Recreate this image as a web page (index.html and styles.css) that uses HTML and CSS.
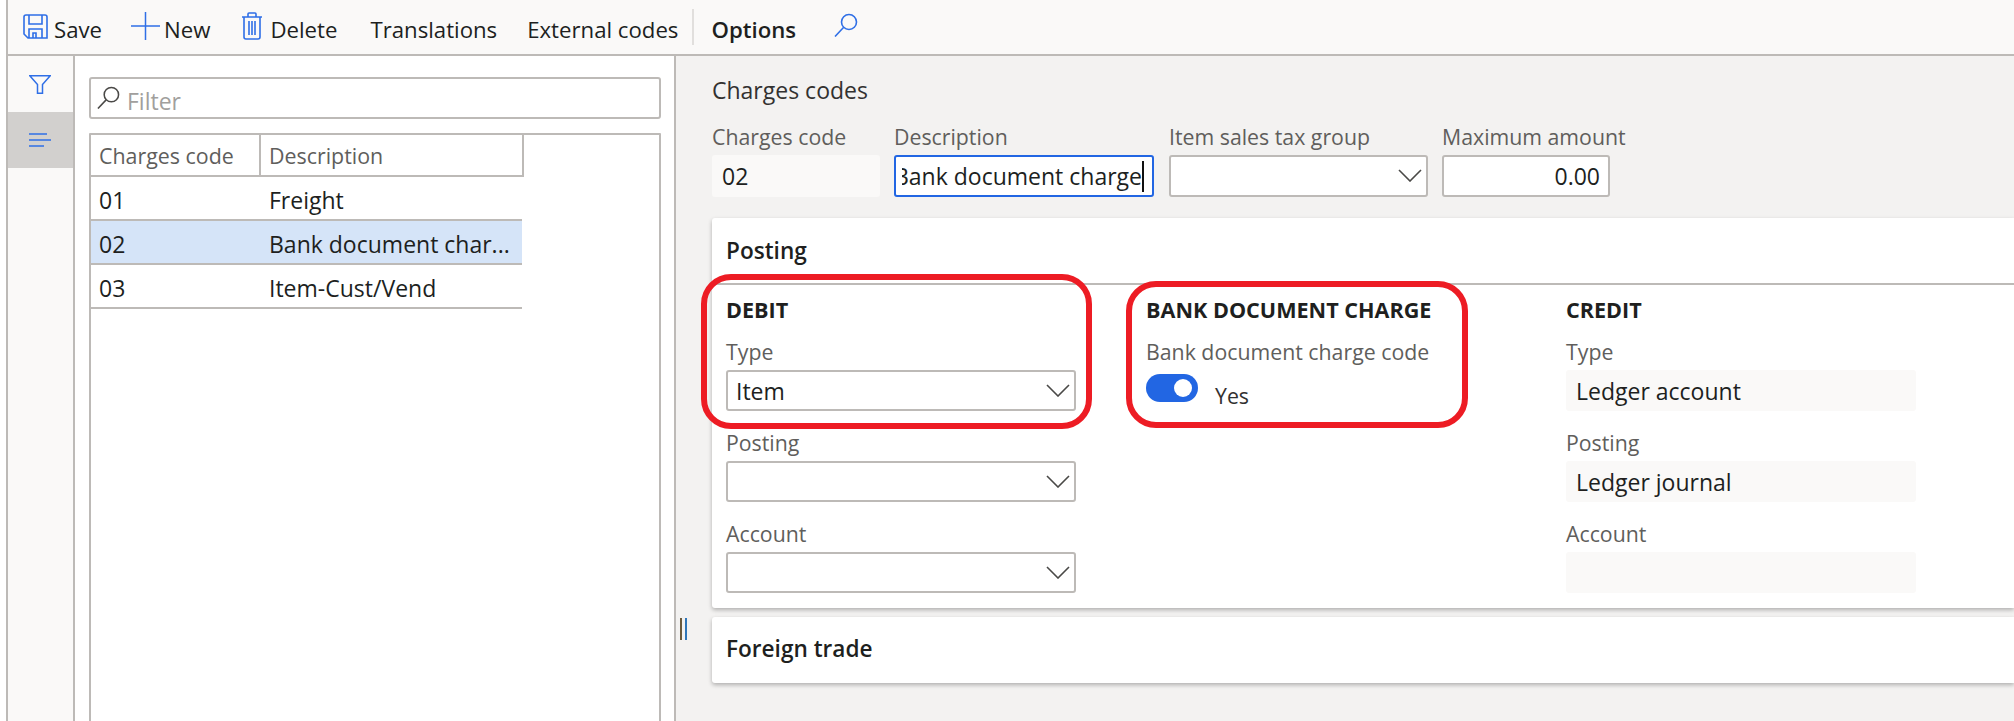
FILE: index.html
```html
<!DOCTYPE html>
<html lang="en">
<head>
<meta charset="utf-8">
<title>Charges codes</title>
<link rel="stylesheet" href="styles.css">
</head>
<body>
<svg class="defs" width="0" height="0" aria-hidden="true">
  <symbol id="chev" viewBox="0 0 24 13"><path d="M1 1 L12 12 L23 1" fill="none" stroke="#4a4947" stroke-width="1.6"/></symbol>
  <symbol id="lens" viewBox="0 0 24 24"><circle cx="15" cy="9" r="7.5" fill="none" stroke="currentColor" stroke-width="1.6"/><path d="M9.5 14.5 L1 23.5" fill="none" stroke="currentColor" stroke-width="1.6"/></symbol>
</svg>
<header class="toolbar">
  <button class="tool tool-save">
    <svg class="ico ico-save" viewBox="0 0 25 25"><path d="M1 3 Q1 1 3 1 H22 Q24 1 24 3 V24 H5 L1 20 Z M6 1 V10 H19 V1 M6 24 V15 H19 V24 M10 24 V19 H13 V24" fill="none" stroke="#2f6fe6" stroke-width="1.6"/></svg>
    <span class="tool-text">Save</span>
  </button>
  <button class="tool tool-new">
    <svg class="ico ico-plus" viewBox="0 0 29 28"><path d="M0 14 H29 M14.5 0 V28" fill="none" stroke="#2f6fe6" stroke-width="1.5"/></svg>
    <span class="tool-text">New</span>
  </button>
  <button class="tool tool-delete">
    <svg class="ico ico-trash" viewBox="0 0 22 28"><path d="M1 5 H21 M3 5 V25 Q3 27 5 27 H17 Q19 27 19 25 V5 M7 5 V2 Q7 1 8 1 H14 Q15 1 15 2 V5 M8 9 V23 M11 9 V23 M14 9 V23" fill="none" stroke="#2f6fe6" stroke-width="1.6"/></svg>
    <span class="tool-text">Delete</span>
  </button>
  <button class="tool tool-trans"><span class="tool-text">Translations</span></button>
  <button class="tool tool-ext"><span class="tool-text">External codes</span></button>
  <span class="tool-sep"></span>
  <button class="tool tool-options"><span class="tool-text">Options</span></button>
  <svg class="ico ico-search"><use href="#lens"/></svg>
</header>

<div class="workspace">
  <nav class="rail">
    <div class="rail-item">
      <svg class="ico ico-filter" viewBox="0 0 22 19"><path d="M0.8 0.8 H21.2 L13.5 9.5 V18.2 H8.5 V9.5 Z" fill="none" stroke="#2f6fe6" stroke-width="1.5"/></svg>
    </div>
    <div class="rail-item rail-active">
      <svg class="ico ico-lines" viewBox="0 0 22 14"><path d="M0 1 H18 M0 7 H22 M0 13 H15" fill="none" stroke="#2f6fe6" stroke-width="1.5"/></svg>
    </div>
  </nav>

  <aside class="list-pane">
    <div class="filter-box">
      <svg class="ico ico-lens"><use href="#lens"/></svg>
      <span class="filter-text">Filter</span>
    </div>
    <div class="list-frame">
      <div class="list-row list-head">
        <div class="cell cell-code">Charges code</div>
        <div class="cell cell-desc">Description</div>
      </div>
      <div class="list-row">
        <div class="cell cell-code">01</div>
        <div class="cell cell-desc">Freight</div>
      </div>
      <div class="list-row list-selected">
        <div class="cell cell-code">02</div>
        <div class="cell cell-desc">Bank document char...</div>
      </div>
      <div class="list-row">
        <div class="cell cell-code">03</div>
        <div class="cell cell-desc">Item-Cust/Vend</div>
      </div>
    </div>
  </aside>

  <div class="splitter"><span class="grip"></span></div>

  <main class="detail">
    <h1 class="page-title">Charges codes</h1>
    <div class="head-fields">
      <div class="field f-code">
        <label class="lbl">Charges code</label>
        <div class="box box-ro">02</div>
      </div>
      <div class="field f-desc">
        <label class="lbl">Description</label>
        <div class="box box-focus"><span class="typed-clip"><span class="typed">Bank document charge</span></span></div>
      </div>
      <div class="field f-group">
        <label class="lbl">Item sales tax group</label>
        <div class="box box-select"><svg class="chev"><use href="#chev"/></svg></div>
      </div>
      <div class="field f-max">
        <label class="lbl">Maximum amount</label>
        <div class="box box-num">0.00</div>
      </div>
    </div>

    <section class="card">
      <h2 class="card-title">Posting</h2>
      <div class="columns">
        <div class="col">
          <h3 class="col-title">DEBIT</h3>
          <div class="field w-select">
            <label class="lbl">Type</label>
            <div class="box box-select"><span>Item</span><svg class="chev"><use href="#chev"/></svg></div>
          </div>
          <div class="field w-select">
            <label class="lbl">Posting</label>
            <div class="box box-select"><svg class="chev"><use href="#chev"/></svg></div>
          </div>
          <div class="field w-select">
            <label class="lbl">Account</label>
            <div class="box box-select"><svg class="chev"><use href="#chev"/></svg></div>
          </div>
        </div>
        <div class="col">
          <h3 class="col-title">BANK DOCUMENT CHARGE</h3>
          <div class="field">
            <label class="lbl">Bank document charge code</label>
            <div class="toggle-row">
              <span class="toggle"><span class="knob"></span></span>
              <span class="toggle-text">Yes</span>
            </div>
          </div>
        </div>
        <div class="col">
          <h3 class="col-title">CREDIT</h3>
          <div class="field w-ro">
            <label class="lbl">Type</label>
            <div class="box box-ro box-ro-wide">Ledger account</div>
          </div>
          <div class="field w-ro">
            <label class="lbl">Posting</label>
            <div class="box box-ro box-ro-wide">Ledger journal</div>
          </div>
          <div class="field w-ro">
            <label class="lbl">Account</label>
            <div class="box box-ro box-ro-wide"></div>
          </div>
        </div>
      </div>
    </section>

    <section class="card card-collapsed">
      <h2 class="card-title card-title-plain">Foreign trade</h2>
    </section>
  </main>
</div>

<div class="mark mark-debit"></div>
<div class="mark mark-bank"></div>
</body>
</html>
```
FILE: styles.css
```css
* { box-sizing: border-box; }
html, body { margin: 0; height: 100%; }
body {
  width: 2014px;
  height: 721px;
  overflow: hidden;
  position: relative;
  background: #fff;
  font-family: "Open Sans", "Noto Sans", sans-serif;
  font-size: 23px;
  color: #201f1e;
}
.defs { position: absolute; }
.ico { display: block; flex: none; }

/* toolbar */
.toolbar {
  height: 56px;
  margin-left: 6px;
  padding-left: 15px;
  display: flex;
  align-items: center;
  background: #faf9f8;
  border-left: 2px solid #bdbab7;
  border-bottom: 2px solid #bdbab7;
  font-size: 22.2px;
}
.tool {
  appearance: none;
  border: 0;
  background: none;
  padding: 0;
  margin: 0;
  font: inherit;
  color: #201f1e;
  display: flex;
  align-items: center;
  white-space: nowrap;
}
.tool-text { margin-top: 4px; }
.tool .ico { margin-top: -2px; }
.tool-save { gap: 6px; }
.tool-new { gap: 4px; margin-left: 29px; }
.tool-delete { gap: 7px; margin-left: 31px; }
.tool-trans { margin-left: 33px; }
.tool-ext { margin-left: 30px; }
.tool-sep { width: 2px; height: 36px; background: #e1dfdd; margin-left: 14px; }
.tool-options { margin-left: 17px; font-weight: 600; }
.ico-save { width: 25px; height: 25px; }
.ico-plus { width: 29px; height: 28px; }
.ico-trash { width: 22px; height: 28px; }
.ico-search { width: 24px; height: 24px; color: #2f6fe6; margin-left: 38px; margin-top: -4px; }

/* workspace */
.workspace {
  display: flex;
  height: 665px;
  margin-left: 6px;
  border-left: 2px solid #bdbab7;
}
.rail {
  width: 67px;
  flex: none;
  background: #faf9f8;
  border-right: 2px solid #bdbab7;
}
.rail-item { height: 56px; display: flex; align-items: center; padding-left: 21px; }
.rail-active { background: #d2d0ce; }
.ico-filter { width: 22px; height: 19px; }
.ico-lines { width: 22px; height: 14px; }

.list-pane {
  width: 601px;
  flex: none;
  background: #fff;
  border-right: 2px solid #bdbab7;
  padding: 21px 13px 0 14px;
}
.filter-box {
  height: 42px;
  border: 2px solid #bdbab7;
  border-radius: 3px;
  display: flex;
  align-items: center;
  padding-left: 6px;
}
.ico-lens { width: 23px; height: 23px; color: #4a4947; margin-top: -2px; }
.filter-text { color: #a19f9d; margin-left: 7px; margin-top: 6px; }
.list-frame {
  margin-top: 14px;
  height: 600px;
  border: 2px solid #bdbab7;
  border-radius: 1px;
}
.list-row {
  display: flex;
  width: 431px;
  height: 44px;
  border-bottom: 2px solid #bdbab7;
  align-items: center;
}
.list-head { height: 42px; color: #605e5c; font-weight: 500; font-size: 21.4px; border-right: 2px solid #bdbab7; width: 433px; }
.list-selected { background: #d5e4f8; }
.cell { height: 100%; display: flex; align-items: center; white-space: nowrap; padding-top: 3px; }
.cell-code { width: 168px; padding-left: 8px; }
.cell-desc { padding-left: 10px; flex: 1; }
.list-head .cell { padding-top: 0; }
.list-head .cell-desc { border-left: 2px solid #bdbab7; padding-left: 8px; }

.splitter { width: 36px; flex: none; display: flex; padding: 562px 0 0 4px; background: #f3f2f1; }
.grip {
  width: 7px;
  height: 22px;
  border-left: 2px solid #6b5a3c;
  border-right: 2px solid #2f76b8;
}

/* detail */
.detail {
  flex: 1;
  min-width: 0;
  background: #f3f2f1;
  padding-top: 20px;
}
.page-title {
  margin: 0;
  font-size: 23px;
  font-weight: 400;
  line-height: 28px;
  color: #323130;
}
.head-fields { display: flex; margin-top: 19px; }
.head-fields .lbl { margin-bottom: 5px; line-height: 27px; }
.head-fields .box { height: 42px; }
.field { display: flex; flex-direction: column; }
.lbl { height: 27px; line-height: 25px; margin-bottom: 4px; color: #605e5c; font-size: 21.3px; white-space: nowrap; }
.box {
  height: 41px;
  display: flex;
  align-items: center;
  border: 2px solid #bdbab7;
  border-radius: 3px;
  background: #fff;
  padding: 0 8px;
  white-space: nowrap;
  overflow: hidden;
}
.box-ro { background: #faf9f8; border-color: #faf9f8; }
.box-ro-wide { padding-left: 8px; }
.box-focus { border-color: #2266e3; padding: 0 8px 0 6px; }
.typed-clip { flex: 1; min-width: 0; overflow: hidden; display: flex; justify-content: flex-end; }
.typed { border-right: 2px solid #111; line-height: 31px; flex: none; }
.box-select { justify-content: space-between; position: relative; }
.box-num { justify-content: flex-end; }
.chev { width: 24px; height: 13px; position: absolute; right: 4px; top: 12px; }
.f-code { width: 168px; margin-right: 14px; }
.f-desc { width: 260px; margin-right: 15px; }
.f-group { width: 259px; margin-right: 14px; }
.f-max { width: 168px; }

.card {
  margin-top: 21px;
  background: #fff;
  border-radius: 3px 0 0 3px;
  box-shadow: 0 2px 4px rgba(0, 0, 0, 0.28);
}
.card-title {
  margin: 0;
  height: 67px;
  padding: 19px 0 0 14px;
  font-size: 22.6px;
  line-height: 28px;
  font-weight: 600;
  border-bottom: 2px solid #bdbab7;
}
.columns {
  display: grid;
  grid-template-columns: 420px 420px 350px;
  padding: 13px 0 15px 14px;
}
.col-title {
  margin: 0 0 15px;
  height: 26px;
  font-size: 21.6px;
  line-height: 24px;
  font-weight: 700;
  color: #201f1e;
  white-space: nowrap;
}
.col .field + .field { margin-top: 19px; }
.w-select { width: 350px; }
.w-ro { width: 350px; }
.toggle-row { display: flex; align-items: flex-start; margin-top: 4px; }
.toggle {
  width: 52px;
  height: 28px;
  border-radius: 14px;
  background: #2266e3;
  position: relative;
  flex: none;
}
.knob {
  position: absolute;
  right: 6px;
  top: 5px;
  width: 18px;
  height: 18px;
  border-radius: 50%;
  background: #fff;
}
.toggle-text { margin-left: 17px; margin-top: 8px; line-height: 28px; color: #323130; font-size: 21.3px; }

.card-collapsed { margin-top: 9px; height: 66px; }
.card-title-plain { height: 66px; border-bottom: 0; padding-top: 18px; }

/* hand-drawn annotation rings over the form */
.mark {
  position: absolute;
  border: 6px solid #ed1c24;
  border-radius: 30px;
  pointer-events: none;
}
.mark-debit { left: 701px; top: 274px; width: 391px; height: 155px; }
.mark-bank { left: 1126px; top: 281px; width: 342px; height: 147px; }
```
